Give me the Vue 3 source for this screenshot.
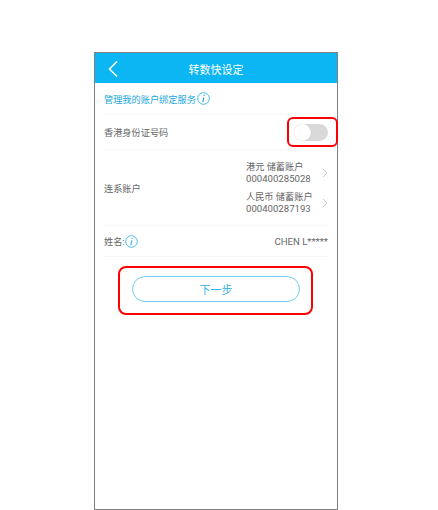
<template>
  <div class="page">
    <div class="phone">
      <header class="topbar">
        <svg class="back" width="12" height="18" viewBox="0 0 12 18">
          <path d="M10 1.5 L2.5 9 L10 16.5" fill="none" stroke="#fff" stroke-width="1.5" />
        </svg>
        <span>转数快设定</span>
      </header>

      <div class="section-title row-line">
        <span>管理我的账户绑定服务</span>
        <svg class="info" width="13" height="13" viewBox="0 0 13 13">
          <circle cx="6.5" cy="6.5" r="5.8" fill="none" stroke="#1ba9dc" stroke-width="0.8" />
          <path d="M7.2 2.8v1.2M6.8 5.5 5.9 10" fill="none" stroke="#1ba9dc" stroke-width="1.2" />
        </svg>
      </div>

      <div class="row id-row row-line">
        <span>香港身份证号码</span>
        <div class="switch"><div class="knob"></div></div>
      </div>

      <div class="row account-row row-line">
        <span>连系账户</span>
        <div class="accounts">
          <div v-for="acc in accounts" :key="acc.no" class="account">
            <div class="account-text">
              <div>{{ acc.name }}</div>
              <div class="latin">{{ acc.no }}</div>
            </div>
            <svg class="chevron" width="6" height="10" viewBox="0 0 6 10">
              <path d="M1 1 L5 5 L1 9" fill="none" stroke="#c9c9c9" stroke-width="1" />
            </svg>
          </div>
        </div>
      </div>

      <div class="row name-row row-line">
        <div class="name-label">
          <span>姓名:</span>
          <svg class="info" width="13" height="13" viewBox="0 0 13 13">
            <circle cx="6.5" cy="6.5" r="5.8" fill="none" stroke="#35b5e5" stroke-width="0.9" />
            <path d="M7.2 2.8v1.2M6.8 5.5 5.9 10" fill="none" stroke="#35b5e5" stroke-width="1.2" />
          </svg>
        </div>
        <span class="latin">CHEN L*****</span>
      </div>

      <div class="actions">
        <button type="button" class="next">下一步</button>
      </div>
    </div>

    <div class="mark mark-switch"></div>
    <div class="mark mark-button"></div>
  </div>
</template>

<script setup>
const accounts = [
  { name: '港元 储蓄账户', no: '000400285028' },
  { name: '人民币 储蓄账户', no: '000400287193' },
];
</script>

<style scoped>
.page {
  position: relative;
  width: 438px;
  height: 510px;
  background: #fff;
  padding: 52px 0 0 94px;
  box-sizing: border-box;
  overflow: hidden;
  font-family: Roboto, "Noto Sans CJK SC", sans-serif;
  font-size: 9.2px;
  color: #666;
}

.latin {
  font-size: 9.6px;
}

.phone {
  width: 244px;
  height: 458px;
  box-sizing: border-box;
  border: 1px solid #808080;
  background: #fff;
}

.topbar {
  position: relative;
  height: 30px;
  background: #0cb6f2;
  color: #fff;
  font-size: 11px;
  display: flex;
  align-items: center;
  justify-content: center;
  padding-top: 1px;
  box-sizing: border-box;
}

.back {
  position: absolute;
  left: 12px;
  top: 7px;
}

.section-title {
  height: 31px;
  margin: 0 9px;
  display: flex;
  align-items: center;
  gap: 1px;
  color: #1ba9dc;
}

.row {
  margin: 0 9px;
  display: flex;
  align-items: center;
  justify-content: space-between;
}

.row-line {
  border-bottom: 1px solid #f7f7f7;
}

.id-row {
  height: 34px;
}

.switch {
  width: 34px;
  height: 17px;
  border-radius: 9px;
  background: #d9d9d9;
}

.knob {
  width: 17px;
  height: 17px;
  border-radius: 50%;
  background: #fff;
  box-shadow: 0 0 1px rgba(0, 0, 0, 0.15);
}

.account-row {
  height: 75px;
}

.accounts {
  display: flex;
  flex-direction: column;
  gap: 6px;
  width: 82px;
}

.account {
  display: flex;
  align-items: center;
  justify-content: space-between;
  line-height: 12px;
}

.name-row {
  height: 30px;
}

.name-label {
  display: flex;
  align-items: center;
}

.actions {
  display: flex;
  justify-content: center;
  padding-top: 19px;
}

.next {
  width: 168px;
  height: 26px;
  border: 1px solid #6fcdec;
  border-radius: 13px;
  background: #fff;
  color: #2fb2e6;
  font: inherit;
  font-size: 11px;
  padding: 0;
}

.mark {
  position: absolute;
  box-sizing: border-box;
  border: 2px solid #f00;
  border-radius: 6px;
}

.mark-switch {
  left: 287px;
  top: 117px;
  width: 51px;
  height: 30px;
}

.mark-button {
  left: 118px;
  top: 266px;
  width: 195px;
  height: 49px;
  border-radius: 8px;
}
</style>
